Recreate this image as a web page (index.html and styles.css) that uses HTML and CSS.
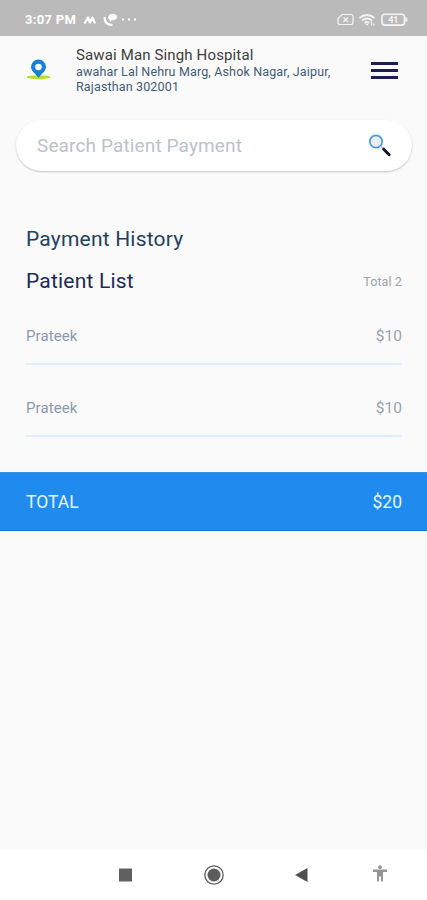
FILE: index.html
```html
<!DOCTYPE html>
<html lang="en">
<head>
<meta charset="utf-8">
<title>Payment History</title>
<link rel="stylesheet" href="styles.css">
</head>
<body>
<div class="screen">
  <div class="status">
    <span class="time">3:07 PM</span>
    <svg class="status-left" width="54" height="16" viewBox="0 0 54 16" fill="none">
      <path d="M1.500 11.500 5 5.500 7 10.500 9.500 5.500 12 11.500" stroke="#fff" stroke-width="2.200" stroke-linejoin="round"/>
      <path d="M21.500 5c0 5 3 8 8 8" stroke="#fff" stroke-width="2.200"/>
      <path d="M25.500 4C27 .8 34 1 34 4.500S30.500 8 28.500 8.500L27 10V8C25 7 24.800 5.500 25.500 4Z" fill="#fff"/>
      <path d="M39 7.500h2M45 7.500h2M51 7.500h2" stroke="#fff" stroke-width="1.800"/>
    </svg>
    <svg class="status-right" width="72" height="16" viewBox="0 0 72 16" fill="none" stroke="#f4f4f4">
      <path d="M5 2.500H14q2 0 2 2v6q0 2-2 2H3q-2 0-2-2v-4Z" stroke-width="1.200"/>
      <path d="m6.500 5.500 4.500 4.500M11 5.500l-4.500 4.500" stroke-width="1.200"/>
      <path d="M22.500 6q7.500-6 15 0M25 8.500q5-4 10 0M27.500 11q2.500-2 4.500 0" stroke-width="1.900"/>
      <path d="m29 12 1 1 1-1M34.500 9.500v4M37 11.500v2" stroke-width="1.200"/>
      <rect x="45" y="2.300" width="22.500" height="10.800" rx="2.800" stroke-width="1.600"/>
      <path d="M69.300 5.500v4" stroke-width="2"/>
      <text x="56.300" y="10.900" text-anchor="middle" class="battery">41</text>
    </svg>
  </div>
  <header class="header">
    <svg class="pin" width="26" height="22" viewBox="0 0 26 22">
      <ellipse cx="12.500" cy="18.200" rx="12" ry="1.900" fill="#b4df35"/>
      <path d="M12.500 19C10.500 15.500 5 12.200 5 8a7.500 7.500 0 0 1 15 0C20 12.200 14.500 15.500 12.500 19Z" fill="#1680dc"/>
      <circle cx="12.500" cy="8" r="3.300" fill="#fff"/>
    </svg>
    <div class="place">
      <div class="name">Sawai Man Singh Hospital</div>
      <div class="address">awahar Lal Nehru Marg, Ashok Nagar, Jaipur,<br>Rajasthan 302001</div>
    </div>
    <div class="menu"><i></i><i></i><i></i></div>
  </header>
  <div class="search">
    <span class="hint">Search Patient Payment</span>
    <svg width="24" height="24" viewBox="0 0 24 24" fill="none">
      <circle cx="8" cy="7.500" r="6.200" fill="#e9edf2" stroke="#4b9de2" stroke-width="1.800"/>
      <path d="m12.500 12 3 3" stroke="#b8bec4" stroke-width="1.200"/>
      <path d="m15.700 15.200 5.500 5.500" stroke="#111820" stroke-width="3" stroke-linecap="round"/>
    </svg>
  </div>
  <main class="list">
    <h1 class="title history">Payment History</h1>
    <div class="list-head"><h2 class="title patients">Patient List</h2><span class="count">Total 2</span></div>
    <div class="row"><span class="patient">Prateek</span><span class="amount">$10</span></div>
    <div class="row"><span class="patient">Prateek</span><span class="amount">$10</span></div>
  </main>
  <div class="total"><span class="label">TOTAL</span><span class="sum">$20</span></div>
  <div class="space"></div>
  <nav class="nav">
    <svg width="427" height="50" viewBox="0 0 427 50">
      <rect x="119" y="18.500" width="13" height="13" fill="#606060"/>
      <circle cx="214" cy="25" r="9.200" fill="none" stroke="#606060" stroke-width="1.300"/>
      <circle cx="214" cy="25" r="6.500" fill="#5c5c5c"/>
      <path d="M295 25 307.500 18v14Z" fill="#505050"/>
      <g fill="#959595"><circle cx="380" cy="17.200" r="1.900"/><path d="M373 19.500h14v2.300l-4 .5V31.500h-2v-5h-2v5h-2v-9.200l-4-.5Z"/></g>
    </svg>
  </nav>
</div>
</body>
</html>
```
FILE: styles.css
```css
* { box-sizing: border-box; }
body { margin: 0; background: #fafafa; font-family: Roboto, sans-serif; }
.screen { width: 427px; height: 900px; display: flex; flex-direction: column; background: #fafafa; overflow: hidden; }
.status { height: 36px; flex: none; display: flex; align-items: center; padding: 3px 18px 0 25px; background: #bababa; color: #fff; }
.time { font-size: 13px; font-weight: 700; letter-spacing: 0.3px; width: 58px; white-space: nowrap; }
.status-right { margin-left: auto; }
.battery { font: 700 9px Roboto, sans-serif; fill: #f4f4f4; stroke: none; }
.header { height: 84px; flex: none; display: flex; align-items: flex-start; padding: 0 29px 0 26px; }
.pin { margin-top: 23px; margin-right: 24px; flex: none; }
.place { padding-top: 10px; flex: 1; white-space: nowrap; }
.name { font-size: 15px; line-height: 18px; letter-spacing: 0.14px; color: #3b3d42; }
.address { font-size: 12.5px; line-height: 15px; letter-spacing: 0.15px; color: #3f5a76; }
.menu { width: 27px; margin-top: 26px; display: flex; flex-direction: column; gap: 4.5px; }
.menu i { height: 2.500px; background: #1c1d55; }
.search { height: 51px; flex: none; margin: 0 15px 0 16px; padding: 0 20px 0 21px; border-radius: 26px; background: #fff; box-shadow: 0 1px 2px rgba(0, 0, 0, 0.22); display: flex; align-items: center; justify-content: space-between; }
.hint { font-size: 19px; letter-spacing: 0.13px; color: #bcc2c9; }
.list { padding: 54px 25px 0 26px; height: 301px; flex: none; }
.title { margin: 0; font-size: 21px; line-height: 28px; font-weight: 400; letter-spacing: 0.2px; }
.history { color: #243f60; }
.patients { color: #1a2b57; }
.list-head { display: flex; justify-content: space-between; align-items: center; margin-top: 14px; height: 28px; }
.count { font-size: 12.5px; letter-spacing: 0.1px; color: #9ca2a8; }
.row { height: 72px; display: flex; justify-content: space-between; padding-top: 34px; line-height: 18px; border-bottom: 2px solid #deedfb; }
.list-head + .row { height: 70px; padding-top: 32px; }
.patient { font-size: 15px; letter-spacing: 0.1px; color: #8d99aa; }
.amount { font-size: 15.5px; color: #98a2aa; }
.total { height: 59px; flex: none; display: flex; justify-content: space-between; align-items: center; padding: 0 25px 0 26px; background: #208bee; border-top: 1px solid #3b91df; border-bottom: 1px solid #147bd3; color: #e9f4ff; font-size: 17.5px; }
.space { flex: 1; }
.nav { height: 50px; flex: none; background: #fff; }
.nav svg { display: block; }
```
